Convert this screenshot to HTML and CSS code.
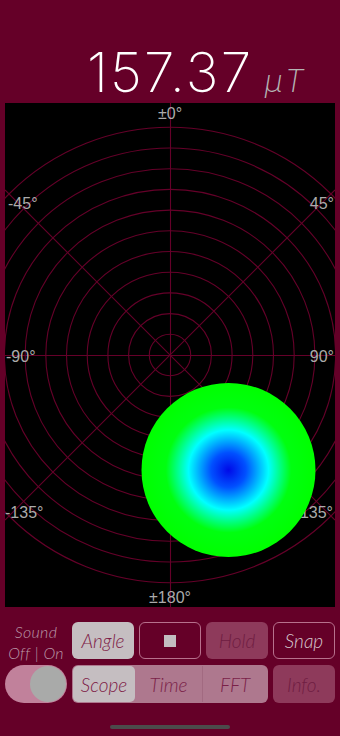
FILE: index.html
```html
<!DOCTYPE html>
<html lang="en">
<head>
<meta charset="utf-8">
<title>Magnetometer</title>
<link rel="stylesheet" href="styles.css">
</head>
<body>
<div class="screen">
  <header class="readout">
    <span class="value">157.37</span>
    <span class="unit">μT</span>
  </header>

  <div class="plot">
    <svg class="polar" width="330" height="504" viewBox="0 0 330 504">
      <defs>
        <radialGradient id="blob" cx="0.5" cy="0.5" r="0.5">
          <stop offset="0" stop-color="#000ae8"/>
          <stop offset="0.2" stop-color="#0050ff"/>
          <stop offset="0.46" stop-color="#00ffff"/>
          <stop offset="0.72" stop-color="#00ff10"/>
          <stop offset="1" stop-color="#00ff00"/>
        </radialGradient>
      </defs>
      <g class="grid">
        <circle cx="165" cy="252" r="20.7"/>
        <circle cx="165" cy="252" r="41.4"/>
        <circle cx="165" cy="252" r="62.1"/>
        <circle cx="165" cy="252" r="82.8"/>
        <circle cx="165" cy="252" r="103.5"/>
        <circle cx="165" cy="252" r="124.2"/>
        <circle cx="165" cy="252" r="144.9"/>
        <circle cx="165" cy="252" r="165.6"/>
        <circle cx="165" cy="252" r="186.3"/>
        <circle cx="165" cy="252" r="207"/>
        <circle cx="165" cy="252" r="227.7"/>
        <line x1="165.5" y1="0" x2="165.5" y2="504"/>
        <line x1="0" y1="252.5" x2="330" y2="252.5"/>
        <line x1="0" y1="87" x2="330" y2="417"/>
        <line x1="330" y1="87" x2="0" y2="417"/>
      </g>
      <g class="labels">
        <text x="165" y="16" text-anchor="middle">±0°</text>
        <text x="3" y="106">-45°</text>
        <text x="329" y="106" text-anchor="end">45°</text>
        <text x="1" y="259">-90°</text>
        <text x="329" y="259" text-anchor="end">90°</text>
        <text x="0" y="415">-135°</text>
        <text x="328" y="415" text-anchor="end">135°</text>
        <text x="165" y="500" text-anchor="middle">±180°</text>
      </g>
      <circle cx="223.5" cy="367" r="87" fill="url(#blob)"/>
    </svg>
  </div>

  <div class="controls">
    <div class="sound-label">Sound<br>Off | On</div>
    <button class="btn btn-light">Angle</button>
    <button class="btn btn-outline btn-stop"><span class="stop-square"></span></button>
    <button class="btn btn-dim">Hold</button>
    <button class="btn btn-outline btn-snap">Snap</button>

    <div class="toggle"><span class="knob"></span></div>
    <div class="segmented">
      <span class="seg seg-active">Scope</span>
      <span class="seg">Time</span>
      <span class="seg seg-split">FFT</span>
    </div>
    <button class="btn btn-dim">Info.</button>
  </div>

  <div class="home-indicator"></div>
</div>
</body>
</html>
```

FILE: styles.css
```css
html, body {
  margin: 0;
  padding: 0;
}

body {
  background: #650028;
  width: 340px;
  height: 736px;
  overflow: hidden;
  font-family: "Lato", "Noto Sans", sans-serif;
}

.screen {
  width: 340px;
  height: 736px;
  display: flex;
  flex-direction: column;
}

.readout {
  height: 103px;
  box-sizing: border-box;
  padding: 44px 0 0 87px;
  display: flex;
  align-items: baseline;
}

.value {
  font-family: "Inter", "Liberation Sans", sans-serif;
  font-weight: 200;
  font-size: 55px;
  line-height: 56px;
  color: #ffffff;
  letter-spacing: 2.2px;
}

.unit {
  font-family: "Inter", "Liberation Sans", sans-serif;
  font-weight: 200;
  font-style: italic;
  font-size: 31px;
  color: #b4b4b4;
  margin-left: 11px;
  letter-spacing: 2px;
}

.plot {
  margin: 0 5px;
  height: 504px;
  background: #000;
}

.polar {
  display: block;
}

.grid circle,
.grid line {
  fill: none;
  stroke: #650029;
  stroke-width: 1.1;
}

.labels text {
  font-family: "Liberation Sans", Arial, sans-serif;
  font-size: 16px;
  fill: #ababab;
}

.controls {
  display: grid;
  grid-template-columns: repeat(5, 62px);
  grid-template-rows: 37px 38px;
  column-gap: 5px;
  row-gap: 6px;
  padding: 15px 5px 0;
}

.sound-label {
  font-style: italic;
  font-weight: 300;
  font-size: 16px;
  line-height: 21px;
  margin-top: -1px;
  color: #bb9aa8;
  text-align: center;
  white-space: nowrap;
  letter-spacing: 0.3px;
}

.btn {
  margin: 0;
  padding: 0;
  border: 1px solid transparent;
  border-radius: 6px;
  font-family: "Lato", "Noto Sans", sans-serif;
  font-style: italic;
  font-weight: 300;
  font-size: 19px;
  display: flex;
  align-items: center;
  justify-content: center;
  box-sizing: border-box;
}

.btn-light {
  background: #c5bec1;
  color: #7e1b46;
}

.btn-outline {
  background: transparent;
  border-color: #b7718d;
  color: #d6c8ce;
}

.btn-dim {
  background: #8e3a5b;
  color: #6f1d42;
}

.stop-square {
  width: 12px;
  height: 12px;
  background: #c3bdc0;
}

.toggle {
  background: #c1819b;
  border-radius: 19px;
  display: flex;
  justify-content: flex-end;
  align-items: center;
  padding: 1px;
}

.knob {
  width: 36px;
  height: 36px;
  border-radius: 50%;
  background: #a9aaa9;
}

.segmented {
  grid-column: 2 / 5;
  background: #ae788e;
  border-radius: 6px;
  display: grid;
  grid-template-columns: 62px 67px 1fr;
  padding: 1px;
}

.seg {
  display: flex;
  align-items: center;
  justify-content: center;
  font-style: italic;
  font-weight: 300;
  font-size: 19px;
  color: #7a2148;
}

.seg-active {
  background: #c5bec1;
  border-radius: 5px;
  color: #7e1b46;
}

.seg-split {
  border-left: 1px solid #a26a81;
}

.home-indicator {
  width: 120px;
  height: 4px;
  border-radius: 2px;
  background: #4b4b4b;
  margin: 22px auto 0;
}
```
